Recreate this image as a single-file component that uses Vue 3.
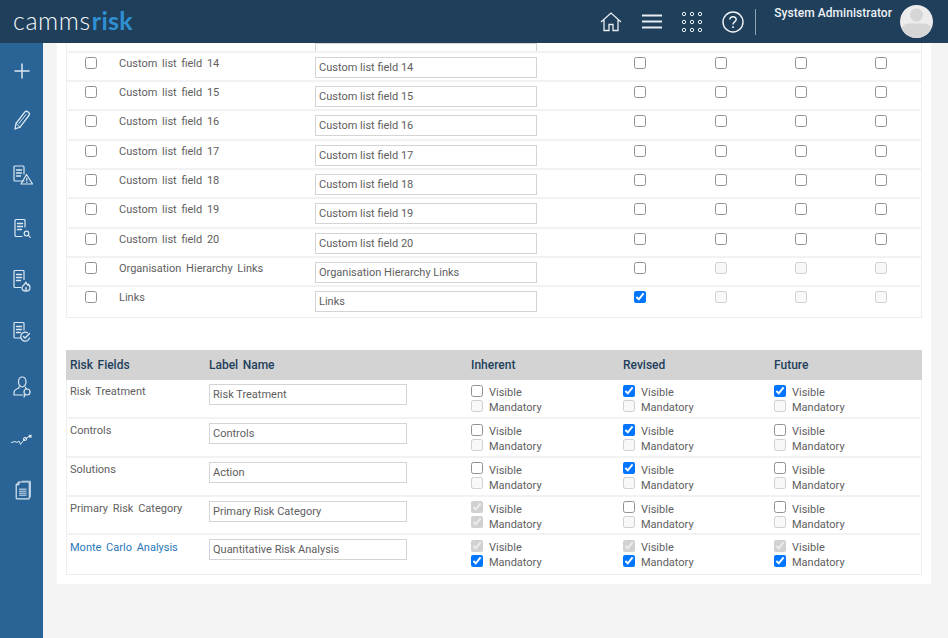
<script setup>
const topRows = [14, 15, 16, 17, 18, 19, 20].map((n) => ({
  name: `Custom list field ${n}`,
  label: `Custom list field ${n}`,
  checked: false,
  disabled: false,
}))
topRows.push(
  { name: 'Organisation Hierarchy Links', label: 'Organisation Hierarchy Links', checked: false, disabled: true },
  { name: 'Links', label: 'Links', checked: true, disabled: true },
)

const off = { v: false, vd: false, m: false, md: true }
const riskRows = [
  { name: 'Risk Treatment', label: 'Risk Treatment', cols: [off, { ...off, v: true }, { ...off, v: true }] },
  { name: 'Controls', label: 'Controls', cols: [off, { ...off, v: true }, off] },
  { name: 'Solutions', label: 'Action', cols: [off, { ...off, v: true }, off] },
  {
    name: 'Primary Risk Category',
    label: 'Primary Risk Category',
    cols: [{ v: true, vd: true, m: true, md: true }, off, off],
  },
  {
    name: 'Monte Carlo Analysis',
    label: 'Quantitative Risk Analysis',
    link: true,
    cols: [
      { v: true, vd: true, m: true, md: false },
      { v: true, vd: true, m: true, md: false },
      { v: true, vd: true, m: true, md: false },
    ],
  },
]

const sideIcons = ['plus', 'pencil', 'warn', 'search', 'fire', 'check', 'user', 'trend', 'docs']
const dots = [0, 1, 2].flatMap((r) => [0, 1, 2].map((c) => ({ cx: 3 + c * 8, cy: 3 + r * 8 })))
</script>

<template>
  <div class="page">
    <header class="topbar">
      <div class="logo"><span class="logo-a">camms</span><span class="logo-b">risk</span></div>
      <nav class="tools">
        <svg class="t-home" width="22" height="20" viewBox="0 0 22 20" fill="none" stroke="#e8eef3" stroke-width="1.300">
          <path d="M1 10 11 1l10 9M4 8v10.500h5v-6h4v6h5V8" />
        </svg>
        <svg class="t-menu" width="20" height="15" viewBox="0 0 20 15" stroke="#e8eef3" stroke-width="2">
          <path d="M0 1.500h20M0 7.500h20M0 13.500h20" />
        </svg>
        <svg class="t-grid" width="22" height="22" viewBox="0 0 22 22" fill="none" stroke="#e8eef3" stroke-width="1">
          <circle v-for="(d, i) in dots" :key="i" :cx="d.cx" :cy="d.cy" r="1.700" />
        </svg>
        <svg class="t-help" width="22" height="22" viewBox="0 0 22 22" fill="none" stroke="#f2f5f8" stroke-width="1.400">
          <circle cx="11" cy="11" r="10" />
          <path d="M7.800 8.600C7.800 6.800 9.200 5.700 11 5.700s3.200 1.100 3.200 2.800c0 2.300-3.200 2.500-3.200 5" />
          <path d="M11 15.300v1.600" stroke-width="1.600" />
        </svg>
        <span class="divider"></span>
        <span class="user">System Administrator</span>
        <svg class="avatar" width="33" height="33" viewBox="0 0 33 33">
          <defs>
            <clipPath id="av"><circle cx="16.500" cy="16.500" r="16.500" /></clipPath>
          </defs>
          <circle cx="16.500" cy="16.500" r="16.500" fill="#ececec" />
          <g clip-path="url(#av)" fill="#d6d6d6">
            <circle cx="16.500" cy="10" r="6.500" />
            <rect x="1" y="18.500" width="31" height="18" rx="8" />
          </g>
        </svg>
      </nav>
    </header>

    <div class="body">
      <aside class="side">
        <div v-for="ic in sideIcons" :key="ic" class="side-item" :class="'s-' + ic">
          <svg width="24" height="24" viewBox="0 0 24 24" fill="none" stroke="#dbe7f1" stroke-width="1.200" stroke-linecap="round" stroke-linejoin="round">
            <template v-if="ic === 'plus'"><path d="M5 12h14M12 5v14" stroke-width="1.500" /></template>
            <template v-else-if="ic === 'pencil'">
              <path d="M5 21 6 15.500 14.500 4.300c1-1.200 2.500-1.300 3.700-.4s1.500 2.400.7 3.600L10 19.200z" stroke-width="1.300" />
              <path d="M6 15.500 10 19.200M9 15.500 16 6.500" stroke-width="1" />
            </template>
            <template v-else-if="ic === 'warn'">
              <path d="M14 17H5a1 1 0 0 1-1-1V3a1 1 0 0 1 1-1h8a1 1 0 0 1 1 1v7" />
              <path d="M6.500 6h5M6.500 9h5M6.500 12h4" stroke-width="1.400" />
              <path d="M16.500 10.500 22.500 20h-11.500z" />
              <path d="M16.800 14v2.500M16.800 18v.4" stroke-width="1.200" />
            </template>
            <template v-else-if="ic === 'search'">
              <path d="M15 10V3.500a1 1 0 0 0-1-1H6a1 1 0 0 0-1 1v15a1 1 0 0 0 1 1h6" />
              <path d="M7.500 6.500h5M7.500 9.500h5M7.500 12.500h4" stroke-width="1.400" />
              <circle cx="16.500" cy="16.500" r="2.300" />
              <path d="m18.300 18.300 2 2" />
            </template>
            <template v-else-if="ic === 'fire'">
              <path d="M14 10.500V2.500a1 1 0 0 0-1-1H5a1 1 0 0 0-1 1V17.500a1 1 0 0 0 1 1h6" />
              <path d="M6.500 5.500h5M6.500 8.500h5M6.500 11.500h4" stroke-width="1.400" />
              <path d="M16 13c.3 1.800 1.200 2.500 2 3.500.3-.5.4-1 .4-1.500 1 1.200 1.600 2.500 1.600 3.800 0 2-1.700 3.300-4 3.300s-4-1.300-4-3.300c0-2.400 3.500-3.500 4-5.800z" />
              <path d="M16 18.500c-1 1-1.100 2.600 0 3.600 1.100-1 1-2.600 0-3.600z" stroke-width=".9" />
            </template>
            <template v-else-if="ic === 'check'">
              <path d="M14 9V2.500a1 1 0 0 0-1-1H5a1 1 0 0 0-1 1V16a1 1 0 0 0 1 1h6" />
              <path d="M6.500 5.500h5M6.500 8.500h5M6.500 11.500h4" stroke-width="1.400" />
              <path d="M19.500 17a4.500 4.500 0 1 1-2-5.200" />
              <path d="m13.500 15.500 1.500 1.500 4.500-4.500" stroke-width="1.400" />
            </template>
            <template v-else-if="ic === 'user'">
              <path d="M8.500 7c0-3 1.500-5 3.700-5s3.800 2 3.800 5c0 2.500-1.700 5-3.800 5S8.500 9.500 8.500 7z" />
              <path d="M9 11.500v1.500c-2.500.8-5 1.800-5 4.500V20h9" />
              <path d="M15.500 12v1l1 .5" />
              <circle cx="17" cy="17" r="3" />
              <path d="m15.300 19.500-1.300 2.500" />
            </template>
            <template v-else-if="ic === 'trend'">
              <path d="M1.500 14.500 5 13.500l2 1 2-1.500 1.500 3.500 2.500-3.500 2.500-2.500 3.500-2" stroke-width="1" />
              <circle cx="15" cy="11" r="1.600" stroke-width="1" />
              <rect x="18.800" y="6.800" width="2.800" height="2.800" fill="#dbe7f1" stroke="none" />
            </template>
            <template v-else>
              <path d="M9 4h9.500a.8.8 0 0 1 .8.800V20a.8.8 0 0 1-.8.800H7a.8.8 0 0 1-.8-.800V6.800z" />
              <path d="M9 4v2.800H6.200" stroke-width="1" />
              <path d="M12 3.200h8.500V19" stroke-width=".8" />
              <rect x="9" y="10.500" width="7.500" height="7.500" fill="#9fbdd8" stroke="none" />
              <path d="M9 12.500h7.500M9 14.500h7.500M9 16.500h7.500" stroke="#2a6496" stroke-width=".6" />
            </template>
          </svg>
        </div>
      </aside>

      <main class="main">
        <section class="panel">
          <div class="table1">
            <div class="row1 row1-cut">
              <span></span>
              <span></span>
              <input class="txt wide" type="text" readonly />
            </div>
            <div v-for="r in topRows" :key="r.name" class="row1">
              <input class="cb" type="checkbox" />
              <span class="name">{{ r.name }}</span>
              <input class="txt wide" type="text" :value="r.label" readonly />
              <input class="cb mid" type="checkbox" :checked="r.checked" />
              <input v-for="n in 3" :key="n" class="cb mid" type="checkbox" :disabled="r.disabled" />
            </div>
          </div>

          <div class="table2">
            <div class="head2">
              <span>Risk Fields</span>
              <span>Label Name</span>
              <span>Inherent</span>
              <span>Revised</span>
              <span>Future</span>
            </div>
            <div v-for="r in riskRows" :key="r.name" class="row2">
              <span class="name2" :class="{ link: r.link }">{{ r.name }}</span>
              <input class="txt narrow" type="text" :value="r.label" readonly />
              <div v-for="(c, i) in r.cols" :key="i" class="pair">
                <label class="opt"><input class="cb" type="checkbox" :checked="c.v" :disabled="c.vd" /><span>Visible</span></label>
                <label class="opt"><input class="cb" type="checkbox" :checked="c.m" :disabled="c.md" /><span>Mandatory</span></label>
              </div>
            </div>
          </div>
        </section>
      </main>
    </div>
  </div>
</template>

<style>
html, body { margin: 0; background: #f4f4f4; }
</style>

<style scoped>
.page {
  width: 948px;
  height: 638px;
  overflow: hidden;
  display: flex;
  flex-direction: column;
  font-family: Roboto, "Liberation Sans", sans-serif;
  background: #f4f4f4;
}
.topbar {
  height: 43px;
  flex: none;
  background: #1f3f5b;
  display: flex;
  align-items: center;
  justify-content: space-between;
}
.logo {
  margin-left: 13px;
  margin-top: -3px;
  font-family: Lato, sans-serif;
  font-size: 25px;
  letter-spacing: .6px;
  line-height: 30px;
}
.logo-a { color: #f4f7fa; font-weight: 300; }
.logo-b { color: #2f90d3; font-weight: 700; letter-spacing: .3px; margin-left: 1px; }
.tools { display: flex; align-items: center; height: 43px; }
.t-home { margin-right: 20px; }
.t-menu { margin-right: 19px; }
.t-grid { margin-right: 19px; }
.t-help { margin-right: 11px; }
.divider { width: 1px; height: 26px; background: #8ea3b5; margin-right: 18px; }
.user {
  align-self: flex-start;
  margin-top: 5px;
  margin-right: 8px;
  font-size: 12px;
  font-weight: 500;
  line-height: 16px;
  color: #eef2f6;
  letter-spacing: .05px;
}
.avatar { margin-right: 15px; margin-top: -1px; }
.body { flex: 1; display: flex; min-height: 0; }
.side {
  width: 43px;
  flex: none;
  background: #2a6496;
  padding-top: 16px;
  box-sizing: border-box;
}
.side-item { display: flex; justify-content: center; align-items: center; height: 24px; }
.s-plus { margin-bottom: 25px; }
.s-pencil { margin-bottom: 32px; }
.s-warn { margin-bottom: 29px; }
.s-search { margin-bottom: 28px; }
.s-fire { margin-bottom: 28px; }
.s-check { margin-bottom: 30px; }
.s-user { margin-bottom: 29px; }
.s-trend { margin-bottom: 26px; }
.main { flex: 1; min-width: 0; padding: 0 17px 0 14px; overflow: hidden; }
.panel {
  background: #fff;
  height: 541px;
  padding: 0 9px;
  box-sizing: border-box;
}
.table1 {
  border: solid #eee;
  border-width: 0 1px 1px;
}
.row1 {
  height: 29.33px;
  box-sizing: border-box;
  border-bottom: 2px solid #f2f2f2;
  display: grid;
  grid-template-columns: 53px 196px 285px repeat(4, 80.4px);
  align-items: start;
  margin: 0 -1px;
  padding-top: 4px;
}
.row1:last-child { border-bottom: 0; }
.row1-cut {
  height: 9.800px;
  padding-top: 0;
  overflow: hidden;
  align-items: end;
}
.row1-cut .wide { margin: 0 0 5px; }
.cb {
  width: 12px;
  height: 12px;
  margin: 0;
  display: block;
}
.cb:not(:checked):not(:disabled) { opacity: .8; }
.row1 > .cb:first-child { margin-left: 19px; }
.row1 > .cb.mid { justify-self: center; }
.name {
  font-size: 11px;
  line-height: 14px;
  color: #606060;
  word-spacing: 2px;
  white-space: nowrap;
}
.txt {
  display: block;
  box-sizing: border-box;
  height: 21px;
  padding: 0 3px;
  border: 1px solid #d4d4d4;
  border-radius: 0;
  outline: 0;
  background: #fff;
  color: #606060;
  font: 400 11px Roboto, "Liberation Sans", sans-serif;
}
.wide { width: 222px; }
.narrow { width: 198px; margin-top: 4px; }
.table2 {
  margin-top: 32.700px;
  border: solid #eee;
  border-width: 0 1px 1px;
}
.head2 {
  height: 30px;
  background: #d3d3d3;
  display: grid;
  grid-template-columns: 139px 262px 152px 151px 1fr;
  align-items: center;
  padding-left: 4px;
  margin: 0 -1px;
  font-size: 12px;
  font-weight: 500;
  word-spacing: 1.500px;
  color: #1f3f5b;
}
.row2 {
  height: 38.750px;
  box-sizing: border-box;
  border-bottom: 2px solid #f2f2f2;
  display: grid;
  grid-template-columns: 139px 262px 152px 151px 1fr;
  align-items: start;
  padding-left: 4px;
  margin: 0 -1px;
}
.row2:last-child { border-bottom: 0; }
.name2 {
  margin-top: 5px;
  font-size: 11px;
  line-height: 14px;
  color: #606060;
  word-spacing: 2px;
  white-space: nowrap;
}
.link { color: #2a77b8; margin-top: 6px; }
.pair { margin-top: 4px; display: flex; flex-direction: column; }
.opt {
  height: 15px;
  display: flex;
  align-items: center;
  font-size: 11px;
  color: #606060;
}
.opt .cb { margin-top: -2px; }
.opt span { margin-left: 6px; padding-top: 2px; }
</style>
